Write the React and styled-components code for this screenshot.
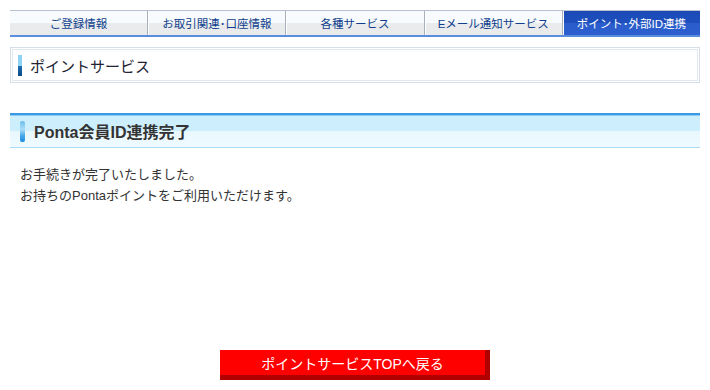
import React from "react";
import styled, { createGlobalStyle } from "styled-components";

const GlobalStyle = createGlobalStyle`
  html, body {
    margin: 0;
    padding: 0;
    background: #ffffff;
  }
  body {
    font-family: "Liberation Sans", "Noto Sans CJK JP", sans-serif;
    color: #333333;
  }
`;

const Page = styled.div`
  width: 690px;
  padding: 10px 10px 0 10px;
  display: flex;
  flex-direction: column;
`;

const TabBar = styled.ul`
  display: flex;
  margin: 0;
  padding: 0;
  list-style: none;
  border-top: 1px solid #b7c0cc;
  border-bottom: 2px solid #5b8ddf;
  height: 24px;
`;

const Tab = styled.li`
  flex: 1;
  display: flex;
  align-items: center;
  justify-content: center;
  font-size: 11.5px;
  color: ${(p) => (p.$active ? "#ffffff" : "#0f3f8c")};
  background: ${(p) =>
    p.$active
      ? "linear-gradient(#1b4ab6 0%, #1e4fbd 50%, #2a5ccb 50%, #2d60ce 100%)"
      : "linear-gradient(#f8fbfd 0%, #f8fbfd 50%, #eaebec 50%, #e8eaeb 100%)"};
  border-left: ${(p) => (p.$first ? "none" : "1px solid #a7b0bd")};
  box-shadow: ${(p) => (p.$first ? "none" : "inset 1px 0 0 #ffffff")};
  white-space: nowrap;
`;

const Dot = styled.span`
  letter-spacing: -2px;
  margin-right: 2px;
`;

const SectionBox = styled.div`
  margin-top: 10px;
  border: 1px solid #d6dee8;
  padding: 1px;
`;

const SectionInner = styled.div`
  border: 1px solid #e2e8ef;
  height: 30px;
  display: flex;
  align-items: center;
  padding-left: 5px;
  gap: 8px;
`;

const SectionMark = styled.span`
  width: 4px;
  height: 21px;
  background: linear-gradient(#8fd3f4 0%, #8fd3f4 54%, #1f6eae 54%, #0a4a86 100%);
`;

const SectionTitle = styled.h2`
  margin: 0;
  font-size: 15px;
  font-weight: normal;
  color: #222233;
`;

const Heading = styled.div`
  margin-top: 30px;
  border-top: 2px solid #3a9ae6;
  border-bottom: 1px solid #a9def8;
  box-shadow: inset 0 1px 0 #8cccf3;
  height: 32px;
  background: linear-gradient(#cdeefd 0%, #cdeefd 48%, #e9f8fe 52%, #eefaff 100%);
  display: flex;
  align-items: center;
  padding-left: 10px;
  gap: 9px;
`;

const HeadingMark = styled.span`
  width: 5px;
  height: 21px;
  border-radius: 2px;
  background: linear-gradient(#6cbdea 0%, #a9dcf7 40%, #49a8e8 70%, #1a8be2 100%);
`;

const HeadingTitle = styled.h1`
  margin: 0;
  font-size: 16px;
  font-weight: bold;
  color: #333333;
`;

const Body = styled.p`
  margin: 16px 0 0 10px;
  font-size: 13px;
  line-height: 21px;
  color: #333333;
`;

const Actions = styled.div`
  display: flex;
  justify-content: center;
  margin-top: 144px;
`;

const BackButton = styled.button`
  width: 270px;
  height: 30px;
  padding: 0;
  border-style: solid;
  border-width: 0 5px 5px 0;
  border-color: #ff0000 #b00000 #b00000 #ff0000;
  background: #ff0000;
  color: #ffffff;
  font-family: "Liberation Sans", "Noto Sans CJK JP", sans-serif;
  font-size: 14px;
  cursor: pointer;
`;

const tabs = [
  ["ご登録情報"],
  ["お取引関連", "口座情報"],
  ["各種サービス"],
  ["Eメール通知サービス"],
  ["ポイント", "外部ID連携"],
];

export default function App() {
  return (
    <Page>
      <GlobalStyle />
      <TabBar>
        {tabs.map((parts, i) => (
          <Tab key={i} $first={i === 0} $active={i === tabs.length - 1}>
            {parts[0]}
            {parts[1] && (
              <>
                <Dot>･</Dot>
                {parts[1]}
              </>
            )}
          </Tab>
        ))}
      </TabBar>
      <SectionBox>
        <SectionInner>
          <SectionMark />
          <SectionTitle>ポイントサービス</SectionTitle>
        </SectionInner>
      </SectionBox>
      <Heading>
        <HeadingMark />
        <HeadingTitle>Ponta会員ID連携完了</HeadingTitle>
      </Heading>
      <Body>
        お手続きが完了いたしました。
        <br />
        お持ちのPontaポイントをご利用いただけます。
      </Body>
      <Actions>
        <BackButton>ポイントサービスTOPへ戻る</BackButton>
      </Actions>
    </Page>
  );
}
